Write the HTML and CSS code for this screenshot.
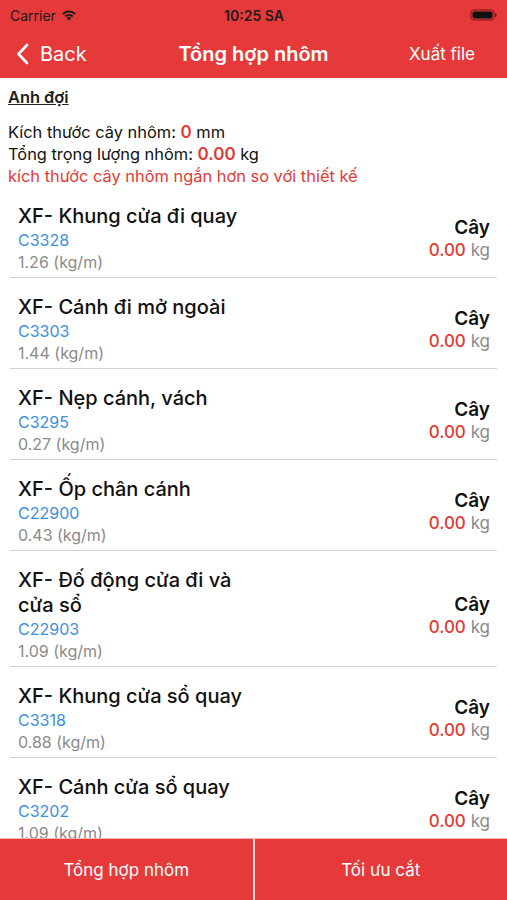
FILE: index.html
```html
<!DOCTYPE html>
<html lang="vi">
<head>
    <meta charset="UTF-8">
    <meta name="viewport" content="width=device-width, initial-scale=1.0">
    <title>Tổng hợp nhôm</title>
    <link rel="stylesheet" href="styles.css">
</head>
<body>
    <header class="top">
        <div class="status">
            <div class="carrier">Carrier
                <svg class="wifi" width="16" height="12" viewBox="0 0 16 12">
                    <path d="M8 11.5 L5.6 8.9 A3.4 3.4 0 0 1 10.4 8.9 Z" fill="#1c1c1c"/>
                    <path d="M3.6 6.8 A6.3 6.3 0 0 1 12.4 6.8 L11.1 8.2 A4.5 4.5 0 0 0 4.9 8.2 Z" fill="#1c1c1c"/>
                    <path d="M1.2 4.3 A9.6 9.6 0 0 1 14.8 4.3 L13.5 5.7 A7.7 7.7 0 0 0 2.5 5.7 Z" fill="#1c1c1c"/>
                </svg>
            </div>
            <div class="time">10:25 SA</div>
            <div class="battery">
                <svg width="28" height="12" viewBox="0 0 28 12">
                    <rect x="1" y="1" width="23" height="10" rx="3" fill="none" stroke="#7a1a1a" stroke-width="1"/>
                    <rect x="2.5" y="2.5" width="20" height="7" rx="1.8" fill="#111"/>
                    <rect x="25" y="4" width="1.6" height="4" rx="0.8" fill="#7a1a1a"/>
                </svg>
            </div>
        </div>
        <nav class="nav">
            <a class="back" href="#">
                <svg width="14" height="22" viewBox="0 0 14 22">
                    <path d="M11 2 L2.5 11 L11 20" fill="none" stroke="#fff" stroke-width="2.6" stroke-linecap="round" stroke-linejoin="round"/>
                </svg>
                Back
            </a>
            <h1 class="title">Tổng hợp nhôm</h1>
            <a class="export" href="#">Xuất file</a>
        </nav>
    </header>

    <section class="info">
        <div class="group">Anh đợi</div>
        <p>Kích thước cây nhôm: <b class="red">0</b> mm</p>
        <p>Tổng trọng lượng nhôm: <b class="red">0.00</b> kg</p>
        <p class="red">kích thước cây nhôm ngắn hơn so với thiết kế</p>
    </section>

    <ul class="list">
        <li class="row">
            <div class="left">
                <div class="name">XF- Khung cửa đi quay</div>
                <div class="code">C3328</div>
                <div class="kgm">1.26 (kg/m)</div>
            </div>
            <div class="right">
                <div class="unit">Cây</div>
                <div class="kg"><span class="red">0.00</span> kg</div>
            </div>
        </li>
        <li class="row">
            <div class="left">
                <div class="name">XF- Cánh đi mở ngoài</div>
                <div class="code">C3303</div>
                <div class="kgm">1.44 (kg/m)</div>
            </div>
            <div class="right">
                <div class="unit">Cây</div>
                <div class="kg"><span class="red">0.00</span> kg</div>
            </div>
        </li>
        <li class="row">
            <div class="left">
                <div class="name">XF- Nẹp cánh, vách</div>
                <div class="code">C3295</div>
                <div class="kgm">0.27 (kg/m)</div>
            </div>
            <div class="right">
                <div class="unit">Cây</div>
                <div class="kg"><span class="red">0.00</span> kg</div>
            </div>
        </li>
        <li class="row">
            <div class="left">
                <div class="name">XF- Ốp chân cánh</div>
                <div class="code">C22900</div>
                <div class="kgm">0.43 (kg/m)</div>
            </div>
            <div class="right">
                <div class="unit">Cây</div>
                <div class="kg"><span class="red">0.00</span> kg</div>
            </div>
        </li>
        <li class="row">
            <div class="left">
                <div class="name">XF- Đố động cửa đi và cửa sổ</div>
                <div class="code">C22903</div>
                <div class="kgm">1.09 (kg/m)</div>
            </div>
            <div class="right">
                <div class="unit">Cây</div>
                <div class="kg"><span class="red">0.00</span> kg</div>
            </div>
        </li>
        <li class="row">
            <div class="left">
                <div class="name">XF- Khung cửa sổ quay</div>
                <div class="code">C3318</div>
                <div class="kgm">0.88 (kg/m)</div>
            </div>
            <div class="right">
                <div class="unit">Cây</div>
                <div class="kg"><span class="red">0.00</span> kg</div>
            </div>
        </li>
        <li class="row">
            <div class="left">
                <div class="name">XF- Cánh cửa sổ quay</div>
                <div class="code">C3202</div>
                <div class="kgm">1.09 (kg/m)</div>
            </div>
            <div class="right">
                <div class="unit">Cây</div>
                <div class="kg"><span class="red">0.00</span> kg</div>
            </div>
        </li>
    </ul>

    <footer class="bottom">
        <button>Tổng hợp nhôm</button>
        <button>Tối ưu cắt</button>
    </footer>
</body>
</html>
```

FILE: styles.css
```css
* {
    box-sizing: border-box;
}
body {
    margin: 0;
    height: 900px;
    display: flex;
    flex-direction: column;
    font-family: Inter, "Noto Sans", sans-serif;
    color: #111;
    background: #fff;
    overflow: hidden;
}
.red {
    color: #e53935;
}
.top {
    background: #e5393a;
    color: #fff;
}
.status {
    height: 30px;
    display: flex;
    align-items: center;
    justify-content: space-between;
    padding: 0 9px 0 10px;
    font-size: 14px;
    color: #1c1c1c;
}
.carrier {
    width: 120px;
    display: flex;
    align-items: center;
    gap: 5px;
}
.time {
    font-weight: 600;
}
.battery {
    width: 120px;
    display: flex;
    justify-content: flex-end;
}
.nav {
    height: 48px;
    display: grid;
    grid-template-columns: 1fr auto 1fr;
    align-items: center;
    padding: 0 32px 0 16px;
}
.back {
    display: flex;
    align-items: center;
    gap: 10px;
    color: #fff;
    text-decoration: none;
    font-size: 20px;
}
.title {
    margin: 0 0 0 16px;
    font-size: 20px;
    font-weight: 600;
}
.export {
    text-align: right;
    color: #fff;
    text-decoration: none;
    font-size: 17px;
}
.info {
    padding: 8px 8px 0 8px;
    font-size: 16.4px;
    line-height: 22px;
}
.group {
    font-weight: 600;
    text-decoration: underline;
    margin-bottom: 13px;
    color: #222;
}
.info p {
    margin: 0;
}
.info b {
    font-weight: 600;
    font-size: 17px;
}
.list {
    list-style: none;
    margin: 0;
    padding: 0;
    flex: 1;
    overflow: hidden;
}
.row {
    margin: 0 10px;
    padding: 17px 7px 4px 8px;
    display: flex;
    align-items: center;
    justify-content: space-between;
    border-bottom: 1px solid #d2d2d2;
}
.left {
    max-width: 240px;
}
.name {
    font-size: 20px;
    font-weight: 500;
    line-height: 25px;
}
.code {
    color: #3b8fe0;
    font-size: 16px;
    line-height: 22px;
}
.kgm {
    color: #8a8a8a;
    font-size: 16px;
    line-height: 22px;
}
.right {
    text-align: right;
}
.unit {
    font-size: 19px;
    font-weight: 600;
    line-height: 23px;
}
.kg {
    color: #8a8a8a;
    font-size: 17px;
    line-height: 22px;
}
.kg .red {
    font-weight: 500;
}
.bottom {
    height: 62px;
    display: flex;
    background: #e5393a;
    border-top: 1px solid #f6b3b3;
}
.bottom button {
    flex: 1;
    border: none;
    background: #e5393a;
    color: #fff;
    font-family: inherit;
    font-size: 17px;
}
.bottom button + button {
    border-left: 2px solid #f4d6d6;
}
```
